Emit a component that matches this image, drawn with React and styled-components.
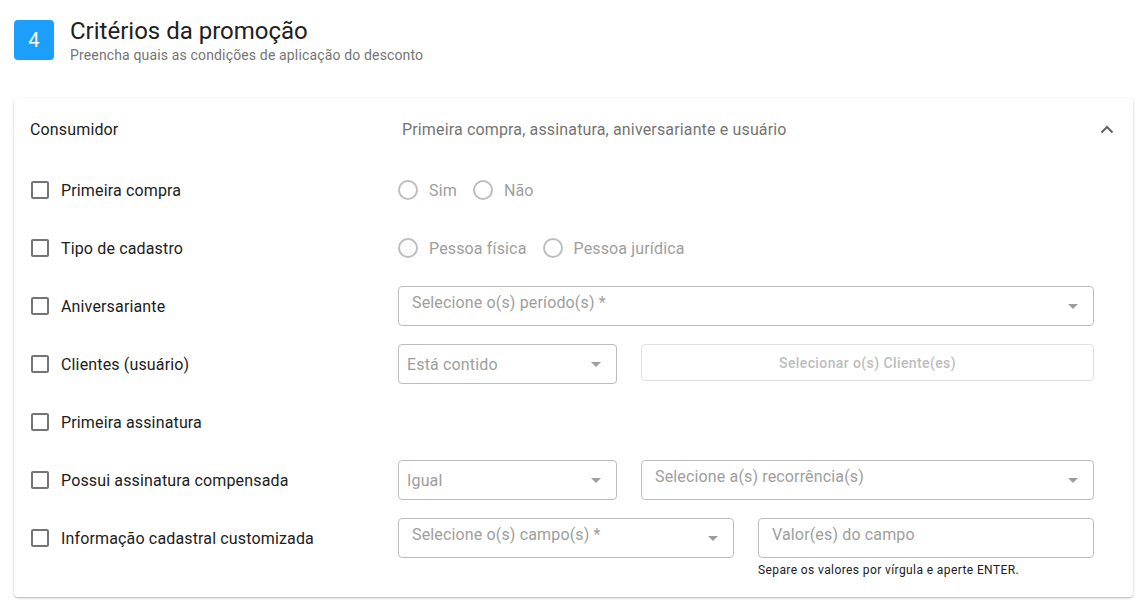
import React from "react";
import styled, { createGlobalStyle } from "styled-components";

const GlobalStyle = createGlobalStyle`
  body {
    margin: 0;
    background: #ffffff;
    font-family: Roboto, "Liberation Sans", sans-serif;
    letter-spacing: 0.15px;
    color: #212121;
  }
`;

const rows = [
  { label: "Primeira compra", kind: "radio", options: ["Sim", "Não"] },
  { label: "Tipo de cadastro", kind: "radio", options: ["Pessoa física", "Pessoa jurídica"] },
  { label: "Aniversariante", kind: "period" },
  { label: "Clientes (usuário)", kind: "clients" },
  { label: "Primeira assinatura", kind: "none" },
  { label: "Possui assinatura compensada", kind: "recurrence" },
  { label: "Informação cadastral customizada", kind: "custom" },
];

const Caret = () => (
  <svg width="10" height="5" viewBox="0 0 10 5">
    <path d="M0 0 L5 5 L10 0 Z" fill="#9e9e9e" />
  </svg>
);

const Select = ({ text, label, width }) => (
  <SelectBox $width={width}>
    {label ? <FieldLabel>{label}</FieldLabel> : <FieldValue>{text}</FieldValue>}
    <CaretWrap>
      <Caret />
    </CaretWrap>
  </SelectBox>
);

const Control = ({ row }) => {
  switch (row.kind) {
    case "radio":
      return (
        <RadioGroup>
          {row.options.map((option) => (
            <RadioOption key={option}>
              <RadioCircle />
              {option}
            </RadioOption>
          ))}
        </RadioGroup>
      );
    case "period":
      return <Select label="Selecione o(s) período(s) *" />;
    case "clients":
      return (
        <Split>
          <Select text="Está contido" width="219px" />
          <GhostButton>Selecionar o(s) Cliente(es)</GhostButton>
        </Split>
      );
    case "recurrence":
      return (
        <Split>
          <Select text="Igual" width="219px" />
          <Select label="Selecione a(s) recorrência(s)" />
        </Split>
      );
    case "custom":
      return (
        <Halves>
          <Select label="Selecione o(s) campo(s) *" />
          <div>
            <TextBox>
              <FieldLabel>Valor(es) do campo</FieldLabel>
            </TextBox>
            <Helper>Separe os valores por vírgula e aperte ENTER.</Helper>
          </div>
        </Halves>
      );
    default:
      return null;
  }
};

const App = () => (
  <>
    <GlobalStyle />
    <Page>
      <StepHeader>
        <Badge>4</Badge>
        <div>
          <Title>Critérios da promoção</Title>
          <Subtitle>Preencha quais as condições de aplicação do desconto</Subtitle>
        </div>
      </StepHeader>

      <Card>
        <CardHeader>
          <SectionName>Consumidor</SectionName>
          <SectionSummary>Primeira compra, assinatura, aniversariante e usuário</SectionSummary>
          <svg width="14" height="9" viewBox="0 0 14 9">
            <path d="M1.5 7.5 L7 2 L12.5 7.5" fill="none" stroke="#616161" strokeWidth="2" />
          </svg>
        </CardHeader>

        <Rows>
          {rows.map((row) => (
            <Row key={row.label}>
              <CheckLabel>
                <CheckBox />
                {row.label}
              </CheckLabel>
              <Control row={row} />
            </Row>
          ))}
        </Rows>
      </Card>
    </Page>
  </>
);

const Page = styled.div`
  padding: 20px 14px 13px 14px;
  width: 1119px;
`;

const StepHeader = styled.div`
  display: flex;
  align-items: flex-start;
  gap: 16px;
  margin-bottom: 34px;
`;

const Badge = styled.div`
  width: 40px;
  height: 40px;
  border-radius: 4px;
  background: #1c9ffa;
  color: #ffffff;
  font-size: 20px;
  display: flex;
  align-items: center;
  justify-content: center;
`;

const Title = styled.h1`
  margin: -4px 0 0;
  font-size: 24px;
  font-weight: 400;
  line-height: 30px;
  letter-spacing: 0;
  color: #212121;
`;

const Subtitle = styled.p`
  margin: 0;
  font-size: 14px;
  line-height: 18px;
  color: #757575;
`;

const Card = styled.div`
  background: #ffffff;
  border-radius: 4px;
  box-shadow: 0 1px 3px rgba(0, 0, 0, 0.2), 0 1px 1px rgba(0, 0, 0, 0.12);
  padding: 0 39px 20px 16px;
`;

const CardHeader = styled.div`
  display: grid;
  grid-template-columns: 372px 1fr 14px;
  align-items: center;
  height: 62px;
  margin-right: -20px;
  margin-bottom: 10px;
`;

const SectionName = styled.span`
  font-size: 16px;
  color: #212121;
`;

const SectionSummary = styled.span`
  font-size: 16px;
  color: #757575;
`;

const Rows = styled.div`
  display: flex;
  flex-direction: column;
  gap: 18px;
`;

const Row = styled.div`
  display: grid;
  grid-template-columns: 368px 696px;
  align-items: start;
  min-height: 40px;
`;

const CheckLabel = styled.label`
  display: flex;
  align-items: center;
  gap: 12px;
  height: 40px;
  padding-left: 1px;
  font-size: 16px;
  color: #212121;
`;

const CheckBox = styled.span`
  width: 18px;
  height: 18px;
  box-sizing: border-box;
  border: 2px solid #757575;
  border-radius: 2px;
`;

const RadioGroup = styled.div`
  display: flex;
  align-items: center;
  gap: 16px;
  height: 40px;
`;

const RadioOption = styled.span`
  display: flex;
  align-items: center;
  gap: 11px;
  font-size: 16px;
  color: #9e9e9e;
`;

const RadioCircle = styled.span`
  width: 20px;
  height: 20px;
  box-sizing: border-box;
  border: 2px solid #bdbdbd;
  border-radius: 50%;
`;

const Split = styled.div`
  display: grid;
  grid-template-columns: 219px 1fr;
  gap: 24px;
`;

const Halves = styled.div`
  display: grid;
  grid-template-columns: 1fr 1fr;
  gap: 24px;
`;

const SelectBox = styled.div`
  position: relative;
  box-sizing: border-box;
  width: ${({ $width }) => $width || "100%"};
  height: 40px;
  border: 1px solid #bdbdbd;
  border-radius: 4px;
  display: flex;
  align-items: center;
`;

const TextBox = styled(SelectBox)``;

const FieldLabel = styled.span`
  padding: 0 0 8px 13px;
  font-size: 16px;
  color: #9e9e9e;
`;

const FieldValue = styled.span`
  padding-left: 8px;
  font-size: 16px;
  color: #9e9e9e;
`;

const CaretWrap = styled.span`
  position: absolute;
  right: 15px;
  top: 17px;
  display: flex;
`;

const GhostButton = styled.button`
  height: 37px;
  border: 1px solid #e0e0e0;
  border-radius: 4px;
  background: #ffffff;
  font-family: Roboto, "Liberation Sans", sans-serif;
  font-size: 14px;
  font-weight: 500;
  letter-spacing: 0.4px;
  color: #bdbdbd;
`;

const Helper = styled.p`
  margin: 5px 0 0;
  font-size: 12px;
  line-height: 14px;
  letter-spacing: 0.4px;
  color: #212121;
`;

export default App;
